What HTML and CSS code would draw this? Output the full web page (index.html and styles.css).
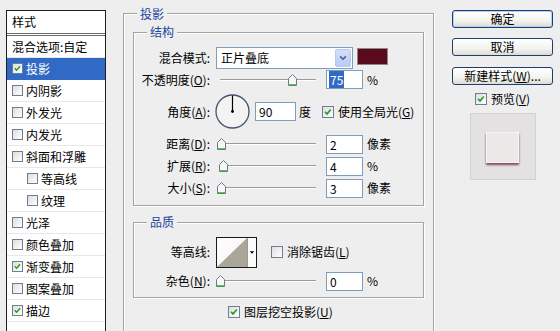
FILE: index.html
```html
<!DOCTYPE html>
<html>
<head>
<meta charset="utf-8">
<link rel="stylesheet" href="styles.css">
</head>
<body>
<div class="dialog">
  <div class="styles-list">
    <div class="list-head">样式</div>
    <div class="item">混合选项:自定</div>
    <div class="item sel"><span class="cb on"><svg viewBox="0 0 11 11"><polyline points="2.2,5.2 4.4,7.6 8.6,2.8"/></svg></span>投影</div>
    <div class="item"><span class="cb"></span>内阴影</div>
    <div class="item"><span class="cb"></span>外发光</div>
    <div class="item"><span class="cb"></span>内发光</div>
    <div class="item"><span class="cb"></span>斜面和浮雕</div>
    <div class="item sub"><span class="cb"></span>等高线</div>
    <div class="item sub"><span class="cb"></span>纹理</div>
    <div class="item"><span class="cb"></span>光泽</div>
    <div class="item"><span class="cb"></span>颜色叠加</div>
    <div class="item"><span class="cb on"><svg viewBox="0 0 11 11"><polyline points="2.2,5.2 4.4,7.6 8.6,2.8"/></svg></span>渐变叠加</div>
    <div class="item"><span class="cb"></span>图案叠加</div>
    <div class="item"><span class="cb on"><svg viewBox="0 0 11 11"><polyline points="2.2,5.2 4.4,7.6 8.6,2.8"/></svg></span>描边</div>
  </div>

  <div class="group outer">
    <span class="legend">投影</span>

    <div class="group struct">
      <span class="legend">结构</span>
      <div class="row r-blend">
        <span class="lbl">混合模式:</span>
        <div class="select">
          <span class="select-text">正片叠底</span>
          <span class="select-btn"><svg viewBox="0 0 15 20"><polyline points="4,8 7.5,11.5 11,8"/></svg></span>
        </div>
        <span class="swatch"></span>
      </div>
      <div class="row r-opacity">
        <span class="lbl">不透明度(<u>O</u>):</span>
        <div class="slider"><span class="thumb" style="left:72px"><svg viewBox="0 0 9 12"><polygon class="tb" points="0.5,4.5 4.5,0.5 8.5,4.5 8.5,11.5 0.5,11.5"/><line class="tg" x1="1" y1="11" x2="8" y2="11"/></svg></span></div>
        <span class="field"><span class="hl">75</span></span>
        <span class="unit">%</span>
      </div>
      <div class="row r-angle">
        <span class="lbl">角度(<u>A</u>):</span>
        <svg class="dial" viewBox="0 0 35 35"><circle cx="17.5" cy="17.5" r="16.5"/><line x1="17.5" y1="17.5" x2="17.5" y2="1.5"/><circle class="dot" cx="17.5" cy="17.5" r="1.4"/></svg>
        <span class="field wide">90</span>
        <span class="unit deg">度</span>
        <span class="cb big on"><svg viewBox="0 0 11 11"><polyline points="2.2,5.2 4.4,7.6 8.6,2.8"/></svg></span>
        <span class="cb-text">使用全局光(<u>G</u>)</span>
      </div>
      <div class="row r-std">
        <span class="lbl">距离(<u>D</u>):</span>
        <div class="slider"><span class="thumb" style="left:1px"><svg viewBox="0 0 9 12"><polygon class="tb" points="0.5,4.5 4.5,0.5 8.5,4.5 8.5,11.5 0.5,11.5"/><line class="tg" x1="1" y1="11" x2="8" y2="11"/></svg></span></div>
        <span class="field">2</span>
        <span class="unit">像素</span>
      </div>
      <div class="row r-std">
        <span class="lbl">扩展(<u>R</u>):</span>
        <div class="slider"><span class="thumb" style="left:3px"><svg viewBox="0 0 9 12"><polygon class="tb" points="0.5,4.5 4.5,0.5 8.5,4.5 8.5,11.5 0.5,11.5"/><line class="tg" x1="1" y1="11" x2="8" y2="11"/></svg></span></div>
        <span class="field">4</span>
        <span class="unit">%</span>
      </div>
      <div class="row r-std">
        <span class="lbl">大小(<u>S</u>):</span>
        <div class="slider"><span class="thumb" style="left:1px"><svg viewBox="0 0 9 12"><polygon class="tb" points="0.5,4.5 4.5,0.5 8.5,4.5 8.5,11.5 0.5,11.5"/><line class="tg" x1="1" y1="11" x2="8" y2="11"/></svg></span></div>
        <span class="field">3</span>
        <span class="unit">像素</span>
      </div>
    </div>

    <div class="group quality">
      <span class="legend">品质</span>
      <div class="row r-contour">
        <span class="lbl">等高线:</span>
        <span class="contour">
          <svg class="curve" viewBox="0 0 30 29"><polygon points="0,29 30,0 30,29"/></svg>
          <span class="drop"><svg viewBox="0 0 9 29"><polygon points="2,13 7,13 4.5,16"/></svg></span>
        </span>
        <span class="cb big"></span>
        <span class="cb-text">消除锯齿(<u>L</u>)</span>
      </div>
      <div class="row r-std r-noise">
        <span class="lbl">杂色(<u>N</u>):</span>
        <div class="slider"><span class="thumb" style="left:0px"><svg viewBox="0 0 9 12"><polygon class="tb" points="0.5,4.5 4.5,0.5 8.5,4.5 8.5,11.5 0.5,11.5"/><line class="tg" x1="1" y1="11" x2="8" y2="11"/></svg></span></div>
        <span class="field">0</span>
        <span class="unit">%</span>
      </div>
    </div>

    <div class="row r-knock">
      <span class="cb big on"><svg viewBox="0 0 11 11"><polyline points="2.2,5.2 4.4,7.6 8.6,2.8"/></svg></span>
      <span class="cb-text">图层挖空投影(<u>U</u>)</span>
    </div>
  </div>

  <div class="side">
    <div class="btn default">确定</div>
    <div class="btn">取消</div>
    <div class="btn third">新建样式(<u>W</u>)...</div>
    <div class="preview-row">
      <span class="cb big on"><svg viewBox="0 0 11 11"><polyline points="2.2,5.2 4.4,7.6 8.6,2.8"/></svg></span>
      <span class="cb-text">预览(<u>V</u>)</span>
    </div>
    <div class="preview">
      <div class="preview-square"></div>
    </div>
  </div>
</div>
</body>
</html>
```

FILE: styles.css
```css
* { box-sizing: border-box; }
html, body { margin: 0; padding: 0; }
body {
  width: 560px;
  height: 331px;
  overflow: hidden;
  background: #eeeeee;
  font-family: "Noto Sans CJK SC", "Noto Sans", sans-serif;
  font-size: 12px;
  line-height: 14px;
  color: #000;
}
u { text-decoration: underline; text-underline-offset: 1px; }

.dialog {
  display: flex;
  align-items: flex-start;
  height: 331px;
  padding-left: 6px;
}

/* left list */
.styles-list {
  flex: none;
  margin-top: 10px;
  width: 100px;
  height: 321px;
  background: #fff;
  border: 1px solid #1e1e1e;
  border-bottom: none;
}
.list-head {
  height: 25px;
  padding-left: 5px;
  line-height: 22px;
  border-bottom: 3px double #6a6a6a;
}
.item {
  height: 22px;
  display: flex;
  align-items: center;
  gap: 3px;
  padding-left: 5px;
  border-bottom: 1px solid #e8e8e8;
  white-space: nowrap;
}
.item.sub { padding-left: 20px; }
.item.sel { background: #316ac5; color: #fff; border-bottom-color: #316ac5; }

.cb {
  flex: none;
  display: inline-block;
  width: 11px;
  height: 11px;
  border: 1px solid #6f7d92;
  background: linear-gradient(135deg, #dedede, #ffffff);
}
.cb.big { width: 12px; height: 12px; }
.cb svg { display: block; width: 100%; height: 100%; }
.cb polyline { fill: none; stroke: #2a9a2a; stroke-width: 1.8; }

/* groups */
.group {
  position: relative;
  border: 1px solid #a3a3a3;
  box-shadow: inset 1px 1px 0 #fff, 1px 1px 0 #fff;
}
.legend {
  position: absolute;
  top: -8px;
  left: 13px;
  padding: 0 3px;
  background: #eeeeee;
  color: #1d46a0;
  line-height: 14px;
}
.outer {
  flex: none;
  margin-left: 17px;
  margin-top: 13px;
  width: 311px;
  height: 318px;
  border-bottom: none;
  padding: 18px 9px 0;
}
.outer > .legend { top: -7px; }
.struct {
  height: 174px;
  padding-top: 14px;
}
.quality {
  margin-top: 16px;
  height: 76px;
  padding-top: 13px;
}

.row {
  display: flex;
  align-items: center;
  white-space: nowrap;
}
.lbl {
  flex: none;
  width: 76px;
  margin-right: 6px;
  text-align: right;
}
.r-blend { height: 22px; }
.r-opacity { height: 21px; }
.r-angle { height: 43px; }
.r-std { height: 22px; }
.r-contour { height: 32px; }
.r-noise { margin-top: 2px; }
.r-knock { height: 18px; margin-top: 5px; padding-left: 95px; }

.select {
  flex: none;
  width: 137px;
  height: 22px;
  border: 1px solid #7f9db9;
  background: #fff;
  display: flex;
  align-items: center;
  justify-content: space-between;
  padding: 1px;
}
.select-text { padding-left: 3px; }
.select-btn {
  width: 16px;
  height: 18px;
  border: 1px solid #b5c8f3;
  border-radius: 2px;
  background: linear-gradient(#d3defc, #b7cbf7);
}
.select-btn svg { display: block; width: 100%; height: 100%; }
.select-btn polyline { fill: none; stroke: #4d6185; stroke-width: 2; }
.swatch {
  flex: none;
  align-self: flex-start;
  margin-top: 1px;
  margin-left: 4px;
  width: 31px;
  height: 17px;
  border: 1px solid #8a8a8a;
  background: #5b0a1e;
}

.slider {
  flex: none;
  position: relative;
  width: 104px;
  height: 12px;
  background:
    linear-gradient(#9a9a9a, #9a9a9a) 4px 5px / 96px 1px no-repeat,
    linear-gradient(#ffffff, #ffffff) 4px 6px / 96px 1px no-repeat;
}
.thumb {
  position: absolute;
  top: 0;
  width: 9px;
  height: 12px;
}
.thumb svg { display: block; width: 9px; height: 12px; }
.thumb .tb { fill: #f7f7f7; stroke: #6d7a8a; stroke-width: 1; }
.thumb .tg { stroke: #3aa23a; stroke-width: 1.5; }

.field {
  flex: none;
  width: 37px;
  height: 19px;
  margin-left: 6px;
  border: 1px solid #7f9db9;
  background: #fff;
  padding-left: 3px;
  line-height: 17px;
}
.field.wide { width: 41px; margin-left: 5px; }
.hl { background: #316ac5; color: #fff; padding: 0 1px; margin-left: -1px; }
.unit { margin-left: 4px; }
.unit.deg { margin-left: 3px; }

.dial { flex: none; width: 35px; height: 35px; margin-left: -1px; }
.dial circle { fill: #f3f3f3; stroke: #48546c; stroke-width: 1.3; }
.dial line { stroke: #000; stroke-width: 1.2; }
.dial .dot { fill: #000; stroke: none; }

.r-angle .cb { margin-left: 11px; }
.cb-text { margin-left: 4px; }

.contour {
  flex: none;
  display: flex;
  width: 41px;
  height: 31px;
  border: 1px solid #1a1a1a;
  background: #fff;
}
.curve { display: block; width: 30px; height: 29px; background: linear-gradient(135deg, #ffffff, #f2f2f2); }
.curve polygon { fill: #aaa698; }
.drop { width: 9px; height: 29px; border-left: 1px solid #9a9a9a; background: #fbfbfb; }
.drop svg { display: block; width: 100%; height: 100%; }
.drop polygon { fill: #000; }
.r-contour .cb { margin-left: 14px; }

/* right column */
.side {
  flex: none;
  margin-left: 18px;
  margin-top: 10px;
  width: 101px;
  display: flex;
  flex-direction: column;
  align-items: stretch;
}
.btn {
  height: 18px;
  border: 1px solid #1c3f6e;
  border-radius: 3px;
  background: linear-gradient(#ffffff, #f3f3ef 60%, #dedbd2);
  text-align: center;
  line-height: 16px;
}
.btn.default { box-shadow: inset 0 0 0 1px #b7cdf5; }
.btn + .btn { margin-top: 10px; }
.btn.third { margin-top: 11px; }
.preview-row {
  height: 14px;
  margin-top: 7px;
  display: flex;
  align-items: center;
  justify-content: center;
}
.preview {
  align-self: center;
  margin-top: 7px;
  width: 66px;
  height: 67px;
  border: 1px solid #d2d2d2;
  background: #e3e1e1;
  display: flex;
  align-items: center;
  justify-content: center;
}
.preview-square {
  width: 33px;
  height: 31px;
  margin-top: 1px;
  background: #ebe8e8;
  border: 1px solid #f6f4f4;
  box-shadow: 0 2px 2px rgba(90, 10, 30, 0.7);
}
```
